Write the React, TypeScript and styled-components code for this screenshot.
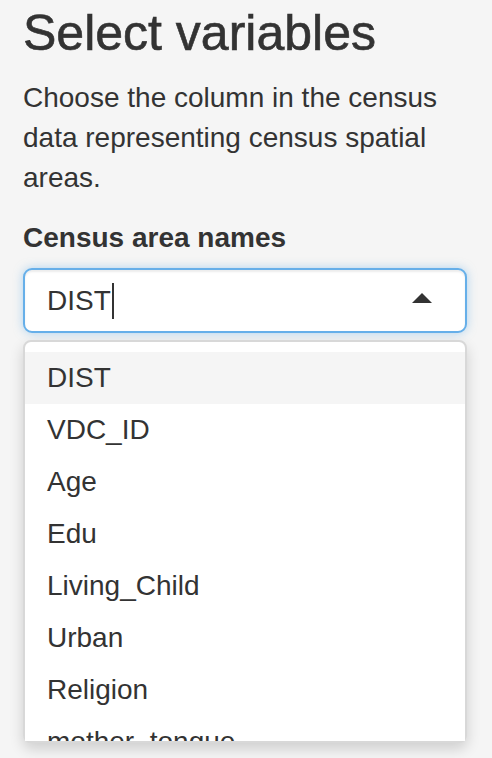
import styled, { createGlobalStyle } from "styled-components";

const GlobalStyle = createGlobalStyle`
  html, body {
    margin: 0;
    padding: 0;
    background: #f5f5f5;
  }
  body {
    font-family: "Liberation Sans", Arial, sans-serif;
    color: #333;
  }
`;

const Well = styled.div`
  padding: 6px 25px 0 23px;
  background: #f5f5f5;
  height: 758px;
  box-sizing: border-box;
  overflow: hidden;
`;

const Title = styled.h3`
  margin: 0;
  font-size: 50px;
  line-height: 55px;
  font-weight: 400;
  color: #333;
  -webkit-text-stroke: 0.6px #333;
`;

const Help = styled.p`
  margin: 17px 0 20px;
  font-size: 28px;
  line-height: 40px;
`;

const Label = styled.label`
  display: block;
  margin-bottom: 10px;
  font-size: 28px;
  line-height: 40px;
  font-weight: 700;
`;

const Control = styled.div`
  display: flex;
  align-items: center;
  height: 65px;
  box-sizing: border-box;
  padding: 0 33px 0 22px;
  background: #fff;
  border: 2px solid #66afe9;
  border-radius: 9px;
  box-shadow: inset 0 2px 2px rgba(0, 0, 0, 0.075),
    0 0 10px rgba(102, 175, 233, 0.5);
`;

const Value = styled.span`
  font-size: 28px;
  line-height: 40px;
  color: #333;
`;

const Caret = styled.span`
  display: inline-block;
  width: 2px;
  height: 36px;
  margin-left: 1px;
  background: #333;
`;

const Arrow = styled.span`
  margin-left: auto;
  margin-top: -6px;
  width: 0;
  height: 0;
  border-left: 10px solid transparent;
  border-right: 10px solid transparent;
  border-bottom: 10px solid #333;
`;

const Dropdown = styled.div`
  margin-top: 7px;
  background: #fff;
  border: 2px solid #d8d8d8;
  border-radius: 8px;
  box-shadow: 0 6px 14px rgba(0, 0, 0, 0.16);
`;

const DropdownContent = styled.div`
  height: 399px;
  padding-top: 10px;
  box-sizing: border-box;
  overflow: hidden;
`;

const Option = styled.div<{ $active?: boolean }>`
  padding: 6px 22px;
  font-size: 28px;
  line-height: 40px;
  color: #333;
  background: ${(p) => (p.$active ? "#f5f5f5" : "#fff")};
`;

const options = [
  "DIST",
  "VDC_ID",
  "Age",
  "Edu",
  "Living_Child",
  "Urban",
  "Religion",
  "mother_tongue",
];

export default function App() {
  return (
    <>
      <GlobalStyle />
      <Well>
        <Title>Select variables</Title>
        <Help>
          Choose the column in the census data representing census spatial
          areas.
        </Help>
        <Label>Census area names</Label>
        <Control>
          <Value>DIST</Value>
          <Caret />
          <Arrow />
        </Control>
        <Dropdown>
          <DropdownContent>
            {options.map((o, i) => (
              <Option key={o} $active={i === 0}>
                {o}
              </Option>
            ))}
          </DropdownContent>
        </Dropdown>
      </Well>
    </>
  );
}
